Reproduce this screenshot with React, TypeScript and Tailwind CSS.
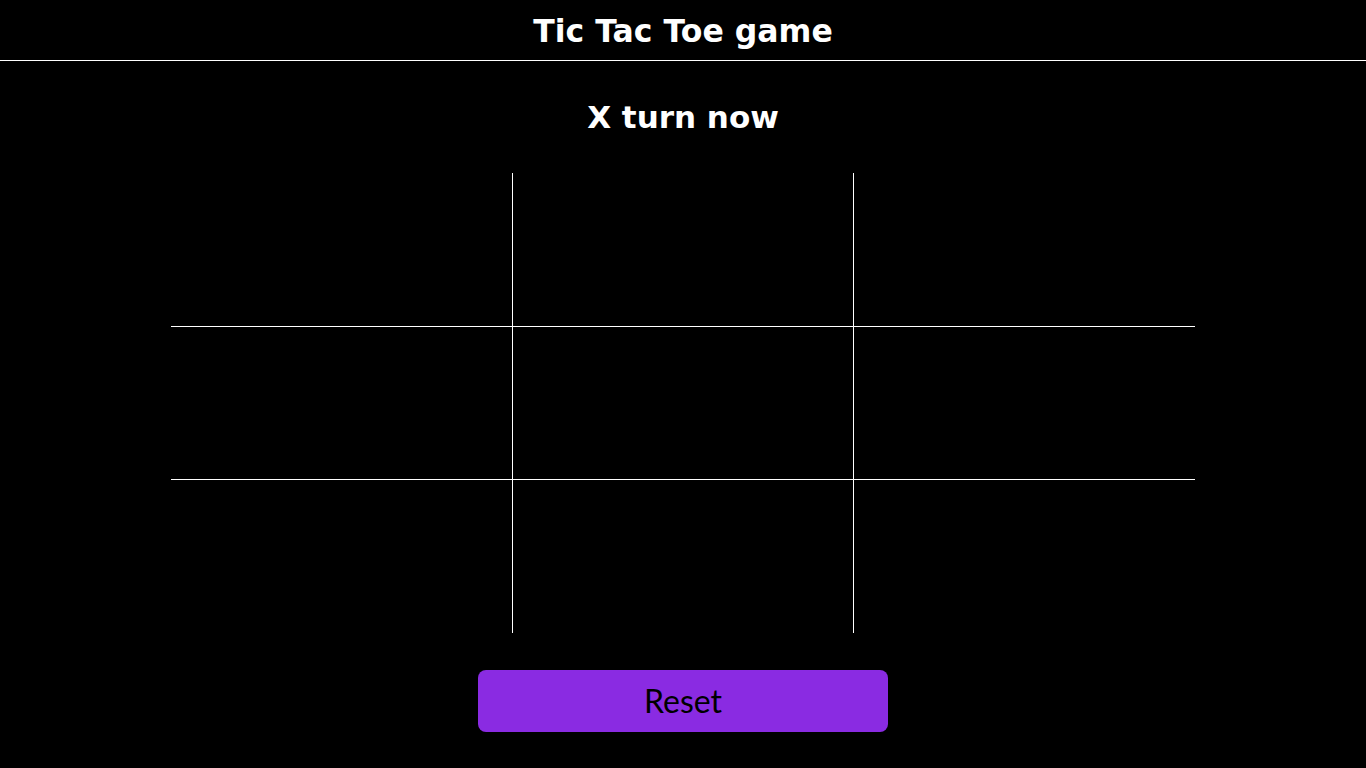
import React from "react";

export default function App() {
  const cells = Array.from({ length: 9 }, (_, i) => i);
  const cellClass = (i: number) => {
    const col = i % 3;
    const row = Math.floor(i / 3);
    let c = "border-white";
    if (col === 1 && row === 1) c += " border-x border-y";
    else if (col === 1) c += " border-x";
    else if (row === 1) c += " border-y";
    return c;
  };
  return (
    <div className="min-h-screen w-full bg-black text-white flex flex-col items-center">
      <header className="w-full h-[61px] pt-[3px] border-b border-white flex items-center justify-center">
        <h1
          className="text-[31.5px] font-bold leading-none text-white"
          style={{ fontFamily: '"DejaVu Sans", sans-serif' }}
        >
          Tic Tac Toe game
        </h1>
      </header>
      <h2
        className="mt-[41px] text-[31px] font-bold leading-none text-white"
        style={{ fontFamily: '"DejaVu Sans", sans-serif' }}
      >
        X turn now
      </h2>
      <div className="mt-[40px] w-[1024px] h-[460px] grid grid-cols-3 grid-rows-3">
        {cells.map((i) => (
          <div key={i} className={cellClass(i)} />
        ))}
      </div>
      <button
        className="mt-[37px] w-[410px] h-[62px] rounded-lg bg-[#8a2be2] text-black text-[32px] flex items-center justify-center"
        style={{ fontFamily: "Lato, sans-serif" }}
      >
        Reset
      </button>
    </div>
  );
}
